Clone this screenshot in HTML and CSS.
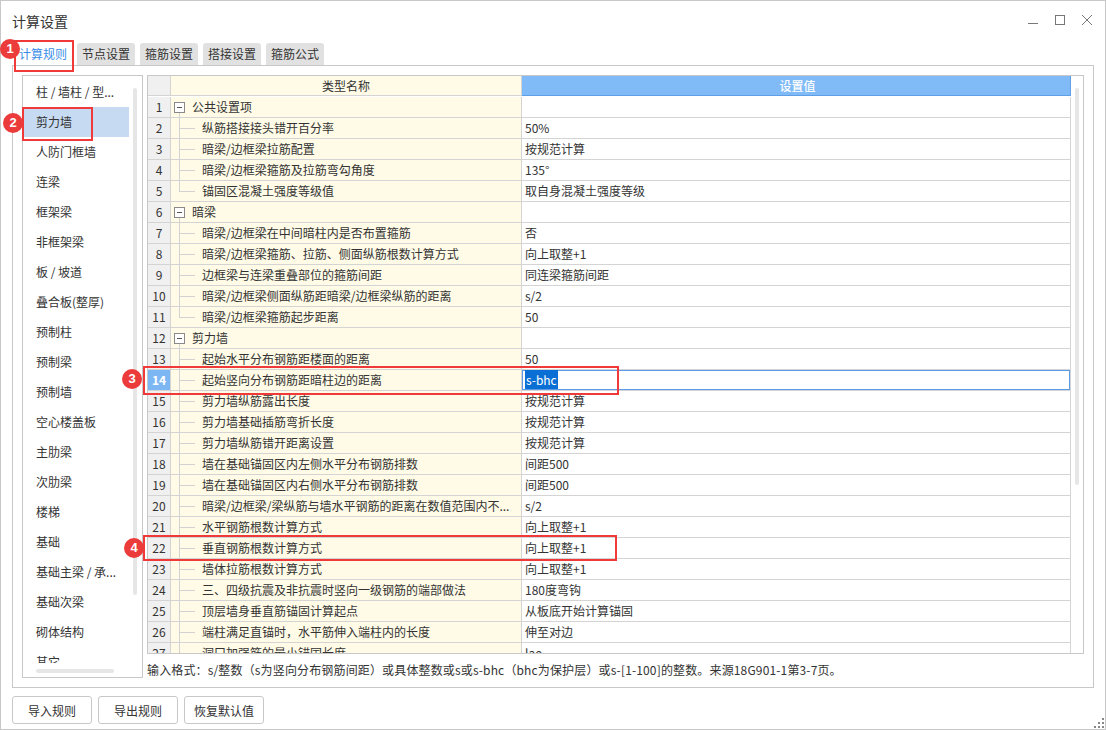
FILE: index.html
```html
<!DOCTYPE html>
<html lang="zh-CN">
<head>
<meta charset="utf-8">
<title>计算设置</title>
<link rel="stylesheet" href="styles.css">
</head>
<body>
<div class="window">
  <div class="titlebar">
    <span class="title">计算设置</span>
    <div class="controls">
      <svg class="ctl" width="12" height="12" viewBox="0 0 12 12"><path d="M1 9.5H11" stroke="#777" stroke-width="1" fill="none"/></svg>
      <svg class="ctl" width="12" height="12" viewBox="0 0 12 12"><rect x="1.5" y="1.5" width="9" height="9" stroke="#777" stroke-width="1" fill="none"/></svg>
      <svg class="ctl" width="12" height="12" viewBox="0 0 12 12"><path d="M1 1L11 11M11 1L1 11" stroke="#777" stroke-width="1" fill="none"/></svg>
    </div>
  </div>

  <div class="tabs">
    <span class="tab active">计算规则</span>
    <span class="tab">节点设置</span>
    <span class="tab">箍筋设置</span>
    <span class="tab">搭接设置</span>
    <span class="tab">箍筋公式</span>
  </div>

  <div class="panel">
    <div class="side">
      <div class="side-items">
        <div class="item">柱 / 墙柱 / 型...</div>
        <div class="item selected">剪力墙</div>
        <div class="item">人防门框墙</div>
        <div class="item">连梁</div>
        <div class="item">框架梁</div>
        <div class="item">非框架梁</div>
        <div class="item">板 / 坡道</div>
        <div class="item">叠合板(整厚)</div>
        <div class="item">预制柱</div>
        <div class="item">预制梁</div>
        <div class="item">预制墙</div>
        <div class="item">空心楼盖板</div>
        <div class="item">主肋梁</div>
        <div class="item">次肋梁</div>
        <div class="item">楼梯</div>
        <div class="item">基础</div>
        <div class="item">基础主梁 / 承...</div>
        <div class="item">基础次梁</div>
        <div class="item">砌体结构</div>
        <div class="item">其它</div>
      </div>
      <div class="hscroll"><span class="hthumb"></span></div>
      <span class="vthumb"></span>
    </div>

    <div class="main">
      <div class="table">
        <div class="grid">
          <div class="hd num"></div><div class="hd name">类型名称</div><div class="hd val">设置值</div>

          <div class="num">1</div><div class="name group"><span class="toggle"></span>公共设置项</div><div class="val"></div>
          <div class="num">2</div><div class="name child">纵筋搭接接头错开百分率</div><div class="val">50%</div>
          <div class="num">3</div><div class="name child">暗梁/边框梁拉筋配置</div><div class="val">按规范计算</div>
          <div class="num">4</div><div class="name child">暗梁/边框梁箍筋及拉筋弯勾角度</div><div class="val">135°</div>
          <div class="num">5</div><div class="name child last">锚固区混凝土强度等级值</div><div class="val">取自身混凝土强度等级</div>
          <div class="num">6</div><div class="name group"><span class="toggle"></span>暗梁</div><div class="val"></div>
          <div class="num">7</div><div class="name child">暗梁/边框梁在中间暗柱内是否布置箍筋</div><div class="val">否</div>
          <div class="num">8</div><div class="name child">暗梁/边框梁箍筋、拉筋、侧面纵筋根数计算方式</div><div class="val">向上取整+1</div>
          <div class="num">9</div><div class="name child">边框梁与连梁重叠部位的箍筋间距</div><div class="val">同连梁箍筋间距</div>
          <div class="num">10</div><div class="name child">暗梁/边框梁侧面纵筋距暗梁/边框梁纵筋的距离</div><div class="val">s/2</div>
          <div class="num">11</div><div class="name child last">暗梁/边框梁箍筋起步距离</div><div class="val">50</div>
          <div class="num">12</div><div class="name group"><span class="toggle"></span>剪力墙</div><div class="val"></div>
          <div class="num">13</div><div class="name child">起始水平分布钢筋距楼面的距离</div><div class="val">50</div>
          <div class="num current">14</div><div class="name child">起始竖向分布钢筋距暗柱边的距离</div><div class="val editing"><span class="sel">s-bhc</span></div>
          <div class="num">15</div><div class="name child">剪力墙纵筋露出长度</div><div class="val">按规范计算</div>
          <div class="num">16</div><div class="name child">剪力墙基础插筋弯折长度</div><div class="val">按规范计算</div>
          <div class="num">17</div><div class="name child">剪力墙纵筋错开距离设置</div><div class="val">按规范计算</div>
          <div class="num">18</div><div class="name child">墙在基础锚固区内左侧水平分布钢筋排数</div><div class="val">间距500</div>
          <div class="num">19</div><div class="name child">墙在基础锚固区内右侧水平分布钢筋排数</div><div class="val">间距500</div>
          <div class="num">20</div><div class="name child">暗梁/边框梁/梁纵筋与墙水平钢筋的距离在数值范围内不...</div><div class="val">s/2</div>
          <div class="num">21</div><div class="name child">水平钢筋根数计算方式</div><div class="val">向上取整+1</div>
          <div class="num">22</div><div class="name child">垂直钢筋根数计算方式</div><div class="val">向上取整+1</div>
          <div class="num">23</div><div class="name child">墙体拉筋根数计算方式</div><div class="val">向上取整+1</div>
          <div class="num">24</div><div class="name child">三、四级抗震及非抗震时竖向一级钢筋的端部做法</div><div class="val">180度弯钩</div>
          <div class="num">25</div><div class="name child">顶层墙身垂直筋锚固计算起点</div><div class="val">从板底开始计算锚固</div>
          <div class="num">26</div><div class="name child">端柱满足直锚时，水平筋伸入端柱内的长度</div><div class="val">伸至对边</div>
          <div class="num">27</div><div class="name child">洞口加强筋的最小锚固长度</div><div class="val">lae</div>
        </div>
        <div class="vscroll"><span class="vthumb2"></span></div>
      </div>
      <div class="hint">输入格式：s/整数（s为竖向分布钢筋间距）或具体整数或s或s-bhc（bhc为保护层）或s-[1-100]的整数。来源18G901-1第3-7页。</div>
    </div>
  </div>

  <div class="footer">
    <button class="btn">导入规则</button>
    <button class="btn">导出规则</button>
    <button class="btn">恢复默认值</button>
    <svg class="grip" width="10" height="10" viewBox="0 0 10 10">
      <rect x="8" y="0" width="2" height="2" fill="#888"/>
      <rect x="4" y="4" width="2" height="2" fill="#888"/>
      <rect x="8" y="4" width="2" height="2" fill="#888"/>
      <rect x="0" y="8" width="2" height="2" fill="#888"/>
      <rect x="4" y="8" width="2" height="2" fill="#888"/>
      <rect x="8" y="8" width="2" height="2" fill="#888"/>
    </svg>
  </div>

  <div class="mark m1"></div>
  <div class="mark m2"></div>
  <div class="mark m3"></div>
  <div class="mark m4"></div>
  <span class="badge b1">1</span>
  <span class="badge b2">2</span>
  <span class="badge b3">3</span>
  <span class="badge b4">4</span>
</div>
</body>
</html>
```

FILE: styles.css
```css
* { box-sizing: border-box; }

html, body {
  margin: 0;
  padding: 0;
  background: #ffffff;
}

body {
  font-family: "Noto Sans CJK SC", "Noto Sans", sans-serif;
  font-size: 12px;
  color: #333333;
}

.window {
  position: relative;
  width: 1106px;
  height: 730px;
  border: 1px solid #c8c8c8;
  background: #ffffff;
  display: flex;
  flex-direction: column;
}

/* title bar */
.titlebar {
  height: 42px;
  display: flex;
  justify-content: space-between;
  align-items: flex-start;
}

.title {
  margin-left: 11px;
  margin-top: 10px;
  font-size: 14px;
  line-height: 20px;
  color: #333;
}

.controls {
  display: flex;
  gap: 15px;
  margin-right: 12px;
  margin-top: 13px;
}

.ctl { display: block; }

/* tabs */
.tabs {
  height: 22px;
  display: flex;
  padding-left: 13px;
  gap: 5px;
}

.tab {
  width: 58px;
  height: 22px;
  line-height: 22px;
  text-align: center;
  background: #e1e1e1;
  color: #333;
  border-radius: 3px 3px 0 0;
}

.tab.active {
  background: #ffffff;
  color: #3a8ee6;
}

/* panel */
.panel {
  margin: 0 11px;
  border: 1px solid #c8c8c8;
  padding: 9px;
  display: flex;
  gap: 4px;
}

.side {
  position: relative;
  width: 121px;
  height: 603px;
  border: 1px solid #c8c8c8;
  display: flex;
  flex-direction: column;
}

.side-items {
  flex: 1;
  overflow: hidden;
  padding-top: 1px;
}

.item {
  width: 106px;
  height: 30px;
  line-height: 30px;
  padding-left: 13px;
  white-space: nowrap;
  color: #333;
}

.item.selected {
  background: #c6dbf1;
}

.hscroll {
  height: 14px;
  padding-top: 6px;
  padding-left: 13px;
}

.hthumb {
  display: block;
  width: 78px;
  height: 4px;
  border-radius: 2px;
  background: #e6e6e6;
}

.vthumb {
  position: absolute;
  left: 110px;
  top: 12px;
  width: 4px;
  height: 507px;
  border-radius: 2px;
  background: #e6e6e6;
}

.main {
  width: 937px;
  display: flex;
  flex-direction: column;
}

.table {
  height: 579px;
  border: 1px solid #c8c8c8;
  display: flex;
  overflow: hidden;
}

.grid {
  display: grid;
  grid-template-columns: 23px 351px 549px;
  grid-auto-rows: 21px;
  align-content: start;
  width: 923px;
}

.grid > div {
  border-right: 1px solid #d4d4d4;
  border-bottom: 1px solid #d4d4d4;
  line-height: 20px;
  white-space: nowrap;
  overflow: hidden;
}

.grid > .hd {
  height: 20px;
  line-height: 19px;
  text-align: center;
  background: #f2f2f2;
  color: #333;
}

.grid > .hd.val {
  background: #80bbf7;
  color: #ffffff;
  font-weight: 500;
  border-right-color: #5f9fe6;
  border-bottom-color: #5f9fe6;
}

.grid > .num {
  text-align: center;
  background: #f0f0f0;
  color: #333;
}

.grid > .num.current {
  background: #7db7f3;
  color: #ffffff;
  font-weight: bold;
}

.grid > .name {
  background-color: #fffbe7;
  color: #333;
}

.grid > .name.child {
  padding-left: 31px;
  background-image: linear-gradient(#d2d2d2, #d2d2d2), linear-gradient(#d2d2d2, #d2d2d2);
  background-repeat: no-repeat;
  background-size: 1px 100%, 16px 1px;
  background-position: 8px 0, 8px 10px;
}

.grid > .name.child.last {
  background-size: 1px 11px, 16px 1px;
}

.grid > .name.group {
  display: flex;
  align-items: center;
  background-image: linear-gradient(#d2d2d2, #d2d2d2);
  background-repeat: no-repeat;
  background-size: 1px 5px;
  background-position: 8px 15px;
}

.toggle {
  width: 11px;
  height: 11px;
  margin-left: 3px;
  margin-right: 7px;
  border: 1px solid #8a8a8a;
  background: #ffffff linear-gradient(#555, #555) no-repeat center / 5px 1px;
  flex: none;
}

.grid > .val {
  padding-left: 3px;
  background: #ffffff;
  color: #333;
}

.grid > .val.editing {
  box-shadow: inset 0 0 0 1px #5b9be6;
  padding-left: 3px;
}

.sel {
  background: #0a6fd4;
  color: #ffffff;
  padding: 1px 1px;
}

.vscroll {
  flex: 1;
  padding-left: 4px;
  padding-top: 12px;
}

.vthumb2 {
  display: block;
  width: 4px;
  height: 397px;
  border-radius: 2px;
  background: #e6e6e6;
}

.hint {
  margin-top: 8px;
  line-height: 16px;
  color: #333;
  white-space: nowrap;
  letter-spacing: 0.15px;
}

/* footer */
.footer {
  flex: 1;
  display: flex;
  align-items: flex-start;
  padding-left: 11px;
  padding-top: 8px;
  gap: 6px;
}

.btn {
  width: 80px;
  height: 28px;
  border: 1px solid #c8c8c8;
  border-radius: 3px;
  background: #ffffff;
  font-family: "Noto Sans CJK SC", "Noto Sans", sans-serif;
  font-size: 12px;
  color: #333;
  padding: 0;
}

.grip {
  margin-left: auto;
  align-self: flex-end;
  margin-right: 1px;
  margin-bottom: 1px;
}

/* annotations */
.mark {
  position: absolute;
  border: 2px solid #f03a3a;
}

.m1 { left: 13px; top: 39px; width: 60px; height: 32px; }
.m2 { left: 21px; top: 106px; width: 71px; height: 34px; }
.m3 { left: 142px; top: 365px; width: 476px; height: 29px; }
.m4 { left: 142px; top: 534px; width: 474px; height: 26px; }

.badge {
  position: absolute;
  width: 20px;
  height: 20px;
  border-radius: 50%;
  background: #ec3b3b;
  color: #ffffff;
  font-family: "Liberation Sans", Arial, sans-serif;
  font-weight: bold;
  font-size: 13px;
  line-height: 20px;
  text-align: center;
}

.b1 { left: -1px; top: 38px; }
.b2 { left: 2px; top: 112px; }
.b3 { left: 121px; top: 368px; }
.b4 { left: 123px; top: 537px; }
```
